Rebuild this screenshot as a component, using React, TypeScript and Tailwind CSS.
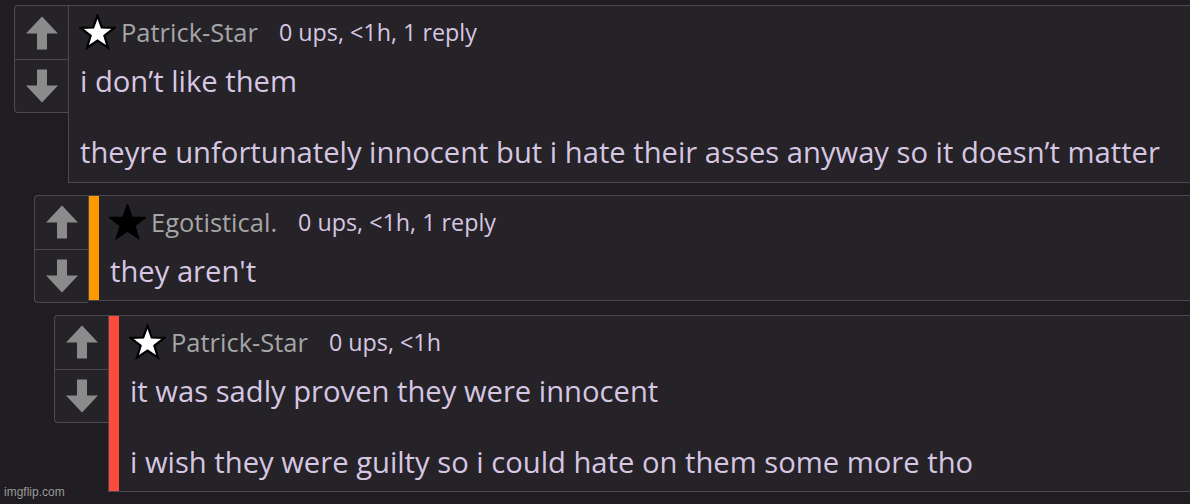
import React from "react";

type Comment = {
  user: string;
  star: "white" | "black";
  meta: string;
  text: string;
  bar?: string;
  indent: string;
};

const comments: Comment[] = [
  {
    user: "Patrick-Star",
    star: "white",
    meta: "0 ups, <1h, 1 reply",
    text: "i don’t like them\n\ntheyre unfortunately innocent but i hate their asses anyway so it doesn’t matter",
    indent: "ml-[14px]",
  },
  {
    user: "Egotistical.",
    star: "black",
    meta: "0 ups, <1h, 1 reply",
    text: "they aren't",
    bar: "bg-[#ff9900]",
    indent: "ml-[34px]",
  },
  {
    user: "Patrick-Star",
    star: "white",
    meta: "0 ups, <1h",
    text: "it was sadly proven they were innocent\n\ni wish they were guilty so i could hate on them some more tho",
    bar: "bg-[#ff4b3e]",
    indent: "ml-[54px]",
  },
];

function Arrow({ down }: { down?: boolean }) {
  return (
    <svg width="34" height="34" viewBox="0 0 34 34" className={down ? "rotate-180" : ""}>
      <path d="M17 0.5 L33 17.5 L22 17.5 L22 33.5 L12 33.5 L12 17.5 L1 17.5 Z" fill="#8b8b8b" />
    </svg>
  );
}

function Star({ fill }: { fill: "white" | "black" }) {
  return (
    <svg width="37" height="37" viewBox="0 0 34 34" className="-ml-[1px] shrink-0">
      <path
        d="M17 1.5 L20.9 12.4 L32.5 12.7 L23.3 19.8 L26.6 31 L17 24.4 L7.4 31 L10.7 19.8 L1.5 12.7 L13.1 12.4 Z"
        fill={fill === "white" ? "#ffffff" : "#000000"}
        stroke="#000000"
        strokeWidth="2"
        strokeLinejoin="miter"
      />
    </svg>
  );
}

function CommentRow({ c }: { c: Comment }) {
  return (
    <div className={`flex items-start ${c.indent}`}>
      <div className="flex w-[54px] shrink-0 flex-col rounded-l-[4px] border border-r-0 border-[#4c4751] bg-[#252228]">
        <button type="button" className="flex h-[54px] items-center justify-center border-b border-[#4c4751]">
          <Arrow />
        </button>
        <button type="button" className="flex h-[52px] items-center justify-center">
          <Arrow down />
        </button>
      </div>
      <div className="flex min-w-0 flex-1 border border-r-0 border-[#4c4751] bg-[#252228]">
        {c.bar ? <div className={`w-[10px] shrink-0 ${c.bar}`} /> : null}
        <div className="min-w-0 flex-1 pb-[11px] pl-[11px]">
          <div className="flex h-[58px] items-center pb-[5px]">
            <Star fill={c.star} />
            <span className="ml-[5px] text-[25.5px] text-[#a6a6a6]">{c.user}</span>
            <span className="ml-[21px] text-[23.3px] text-[#d6c6e1]">{c.meta}</span>
          </div>
          <p className="whitespace-pre-line text-[29.2px] leading-[35.5px] text-[#d6c6e1]">{c.text}</p>
        </div>
      </div>
    </div>
  );
}

export default function App() {
  return (
    <div
      className="relative h-[504px] w-[1190px] overflow-hidden bg-[#1f1d22] pt-[5px]"
      style={{ fontFamily: '"Open Sans", "Noto Sans", sans-serif' }}
    >
      <div className="flex flex-col gap-[12px]">
        {comments.map((c, i) => (
          <CommentRow key={i} c={c} />
        ))}
      </div>
      <span
        className="absolute bottom-[3px] left-[4px] text-[12px] text-[#9a9a9a]"
        style={{ fontFamily: '"Liberation Sans", Arial, sans-serif' }}
      >
        imgflip.com
      </span>
    </div>
  );
}
